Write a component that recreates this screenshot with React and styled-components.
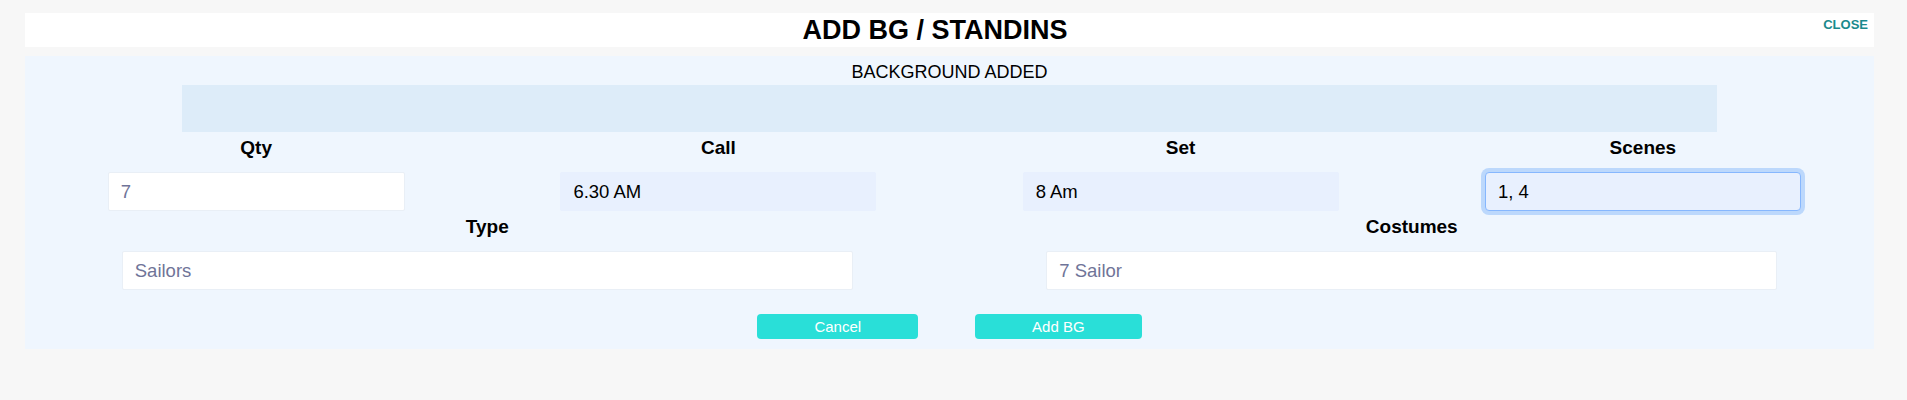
import React from 'react';
import styled, { createGlobalStyle } from 'styled-components';

const GlobalStyle = createGlobalStyle`
    body {
        margin: 0;
        background: #f7f7f7;
        font-family: "Liberation Sans", Arial, sans-serif;
        color: #000;
    }
`;

const Page = styled.div`
    min-height: 400px;
    box-sizing: border-box;
    padding: 13px 33px 0 25px;
`;

const Header = styled.header`
    display: flex;
    height: 34px;
    background: #fff;
`;

const Title = styled.h1`
    flex: 1;
    align-self: center;
    margin: 0;
    padding-left: 22px;
    text-align: center;
    font-size: 27px;
    line-height: 27px;
    font-weight: 700;
`;

const CloseLink = styled.a`
    align-self: flex-start;
    margin: 5px 6px 0 0;
    font-size: 13px;
    line-height: 13px;
    font-weight: 700;
    color: #1b8a8d;
    cursor: pointer;
`;

const Panel = styled.section`
    display: flex;
    flex-direction: column;
    margin-top: 9px;
    padding: 6px 0 10px;
    background: #eff6fe;
`;

const Subtitle = styled.div`
    text-align: center;
    font-size: 18px;
    line-height: 20px;
`;

const Notice = styled.div`
    height: 47px;
    margin: 3px 157px 0;
    background: #ddecf9;
`;

const Row = styled.div`
    display: grid;
    grid-template-columns: repeat(${p => p.$cols}, 1fr);
    margin-top: 6px;
`;

const Field = styled.div`
    display: flex;
    flex-direction: column;
    align-items: center;
    gap: 14px;
`;

const Label = styled.label`
    font-size: 19px;
    line-height: 20px;
    font-weight: 700;
`;

const Input = styled.input`
    box-sizing: border-box;
    width: ${p => p.$width}px;
    height: 39px;
    padding: 0 12px;
    font-family: inherit;
    font-size: 18.5px;
    border-radius: ${p => (p.$focused ? '4px' : '2px')};
    outline: none;
    color: ${p => (p.$filled ? '#000' : '#6f7498')};
    background: ${p => (p.$filled ? '#e8f0fe' : '#fff')};
    border: 1px solid ${p => (p.$focused ? '#86b7fe' : p.$filled ? '#e8f0fe' : '#e9eff6')};
    box-shadow: ${p => (p.$focused ? '0 0 0 4px #bcd8fc' : 'none')};
`;

const Actions = styled.div`
    display: flex;
    justify-content: center;
    gap: 57px;
    margin-top: 24px;
`;

const Button = styled.button`
    height: 25px;
    padding: 0 57px;
    border: none;
    border-radius: 4px;
    background: #29dfd8;
    color: #fff;
    font-family: inherit;
    font-size: 15px;
    cursor: pointer;
`;

const timing = [
    { label: 'Qty', value: '7', width: 297 },
    { label: 'Call', value: '6.30 AM', width: 316, filled: true },
    { label: 'Set', value: '8 Am', width: 316, filled: true },
    { label: 'Scenes', value: '1, 4', width: 316, filled: true, focused: true },
];

const details = [
    { label: 'Type', value: 'Sailors', width: 731 },
    { label: 'Costumes', value: '7 Sailor', width: 731 },
];

function FieldRow({ fields }) {
    return (
        <Row $cols={fields.length}>
            {fields.map(f => (
                <Field key={f.label}>
                    <Label>{f.label}</Label>
                    <Input
                        readOnly
                        value={f.value}
                        $width={f.width}
                        $filled={f.filled}
                        $focused={f.focused}
                    />
                </Field>
            ))}
        </Row>
    );
}

function App() {
    return (
        <Page>
            <GlobalStyle />
            <Header>
                <Title>ADD BG / STANDINS</Title>
                <CloseLink>CLOSE</CloseLink>
            </Header>
            <Panel>
                <Subtitle>BACKGROUND ADDED</Subtitle>
                <Notice />
                <FieldRow fields={timing} />
                <FieldRow fields={details} />
                <Actions>
                    <Button>Cancel</Button>
                    <Button>Add BG</Button>
                </Actions>
            </Panel>
        </Page>
    );
}

export default App;
